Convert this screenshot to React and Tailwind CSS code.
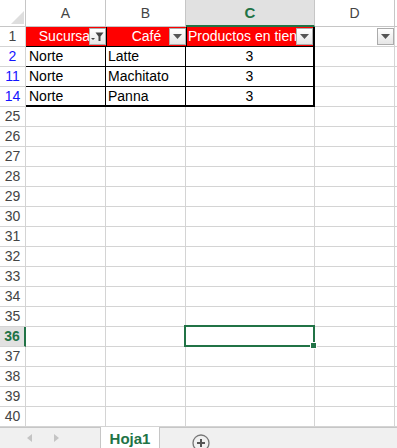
import React from "react";

const font = { fontFamily: '"Liberation Sans", Arial, sans-serif' };

const dataRows = [
  { n: "2", a: "Norte", b: "Latte", c: "3" },
  { n: "11", a: "Norte", b: "Machitato", c: "3" },
  { n: "14", a: "Norte", b: "Panna", c: "3" },
];

const emptyRows = Array.from({ length: 16 }, (_, i) => String(25 + i));

function FilterButton({ active }) {
  return (
    <span className="absolute right-0 top-px w-[17px] h-[17px] border border-[#ababab] bg-gradient-to-b from-white to-[#e6e6e6] flex items-center justify-center">
      {active ? (
        <svg width="15" height="15" viewBox="0 0 15 15">
          <polygon points="1,9 5,9 3,11" fill="#444" />
          <polygon points="5.5,3.5 13.5,3.5 10.5,7.5 10.5,12 8.5,12 8.5,7.5" fill="#444" />
        </svg>
      ) : (
        <svg width="9" height="5" viewBox="0 0 9 5">
          <polygon points="0,0 9,0 4.5,5" fill="#555" />
        </svg>
      )}
    </span>
  );
}

function RowHead({ n, blue, selected }) {
  if (selected) {
    return (
      <div className="w-[26px] h-[20px] shrink-0 border-b border-[#d4d4d4] border-r-2 border-r-[#217346] bg-[#e1e1e1] flex items-center justify-center text-[14px] font-bold text-[#217346]">
        {n}
      </div>
    );
  }
  return (
    <div
      className={
        "w-[26px] h-[20px] shrink-0 border-r border-b border-[#d4d4d4] flex items-center justify-center text-[14px] " +
        (blue ? "text-[#1414ff]" : "text-[#444]")
      }
    >
      {n}
    </div>
  );
}

function Cell({ w, children, className = "" }) {
  return (
    <div className={"h-[20px] shrink-0 border-r border-b border-[#d4d4d4] " + w + " " + className}>
      {children}
    </div>
  );
}

export default function App() {
  return (
    <div className="w-[397px] h-[448px] bg-white overflow-hidden flex flex-col select-none" style={font}>
      <div className="h-[427px] overflow-hidden">
        {/* Column headers */}
        <div className="flex h-[27px]">
          <div className="w-[26px] shrink-0 border-r border-b border-[#c6c6c6] relative">
            <svg className="absolute left-[11px] top-[11px]" width="13" height="13" viewBox="0 0 13 13">
              <polygon points="13,0 13,13 0,13" fill="#dedede" />
            </svg>
          </div>
          {[
            ["A", "w-[80px]"],
            ["B", "w-[80px]"],
          ].map(([l, w]) => (
            <div key={l} className={w + " shrink-0 border-r border-b border-[#c6c6c6] flex items-center justify-center text-[14px] text-[#444]"}>
              {l}
            </div>
          ))}
          <div className="w-[129px] shrink-0 border-r border-[#c6c6c6] border-b-2 border-b-[#217346] bg-[#e1e1e1] flex items-center justify-center text-[15px] font-bold text-[#217346] pt-[2px]">
            C
          </div>
          <div className="w-[80px] shrink-0 border-r border-b border-[#c6c6c6] flex items-center justify-center text-[14px] text-[#444]">
            D
          </div>
          <div className="flex-1 border-b border-[#c6c6c6]" />
        </div>

        {/* Row 1: table header */}
        <div className="flex">
          <RowHead n="1" />
          <div className="w-[80px] h-[20px] shrink-0 bg-[#ff0000] border-b border-black relative overflow-hidden text-white text-[14px] leading-[19px] text-center whitespace-nowrap">
            Sucursal
            <FilterButton active />
          </div>
          <div className="w-[80px] h-[20px] shrink-0 bg-[#ff0000] border-l border-b border-black relative overflow-hidden text-white text-[14px] leading-[19px] text-center whitespace-nowrap">
            Café
            <FilterButton />
          </div>
          <div className="w-[129px] h-[20px] shrink-0 bg-[#ff0000] border-l border-b border-r-2 border-black relative overflow-hidden text-white text-[14px] leading-[19px] pl-px whitespace-nowrap">
            Productos en tienda
            <FilterButton />
          </div>
          <div className="w-[80px] h-[20px] shrink-0 border-r border-b border-[#d4d4d4] relative">
            <FilterButton />
          </div>
          <div className="flex-1 h-[20px] border-b border-[#d4d4d4]" />
        </div>

        {/* Filtered data rows */}
        {dataRows.map((r, i) => (
          <div key={r.n} className="flex">
            <RowHead n={r.n} blue />
            <div className={"w-[80px] h-[20px] shrink-0 border-r border-b border-black text-[14px] leading-[19px] pl-[3px] text-black" + (i === 2 ? " border-b-2" : "")}>
              {r.a}
            </div>
            <div className={"w-[80px] h-[20px] shrink-0 border-r border-b border-black text-[14px] leading-[19px] pl-[2px] text-black" + (i === 2 ? " border-b-2" : "")}>
              {r.b}
            </div>
            <div className={"w-[129px] h-[20px] shrink-0 border-r-2 border-b border-black text-[14px] leading-[19px] text-center text-black" + (i === 2 ? " border-b-2" : "")}>
              {r.c}
            </div>
            <Cell w="w-[80px]" />
            <div className="flex-1 h-[20px] border-b border-[#d4d4d4]" />
          </div>
        ))}

        {/* Empty rows */}
        {emptyRows.map((n) => (
          <div key={n} className="flex">
            <RowHead n={n} selected={n === "36"} />
            <Cell w="w-[80px]" />
            <Cell w="w-[80px]" />
            <Cell w="w-[129px]" className="relative">
              {n === "36" && (
                <div className="absolute -left-[2px] -top-[2px] -right-px -bottom-px border-2 border-[#217346] z-10">
                  <span className="absolute -right-[4px] -bottom-[4px] w-[7px] h-[7px] bg-[#217346] border border-white" />
                </div>
              )}
            </Cell>
            <Cell w="w-[80px]" />
            <div className="flex-1 h-[20px] border-b border-[#d4d4d4]" />
          </div>
        ))}
      </div>

      {/* Sheet tabs */}
      <div className="h-[21px] flex bg-[#f0f0f0] border-t border-[#c6c6c6] relative">
        <div className="w-[100px] shrink-0 flex items-center gap-[22px] pl-[27px] text-[#c0c0c0]">
          <svg width="5" height="8" viewBox="0 0 5 8">
            <polygon points="5,0 5,8 0,4" fill="#c4c4c4" />
          </svg>
          <svg width="5" height="8" viewBox="0 0 5 8">
            <polygon points="0,0 0,8 5,4" fill="#c4c4c4" />
          </svg>
        </div>
        <div className="w-[60px] shrink-0 -mt-px bg-white border-x border-[#c6c6c6] flex items-center justify-center text-[15px] font-bold text-[#217346] pt-[3px]">
          Hoja1
        </div>
        <div className="pl-[32px] pt-[6px]">
          <svg width="18" height="18" viewBox="0 0 18 18">
            <circle cx="9" cy="9" r="8" fill="none" stroke="#777" strokeWidth="1.3" />
            <path d="M9 5v8M5 9h8" stroke="#555" strokeWidth="2" />
          </svg>
        </div>
      </div>
    </div>
  );
}
